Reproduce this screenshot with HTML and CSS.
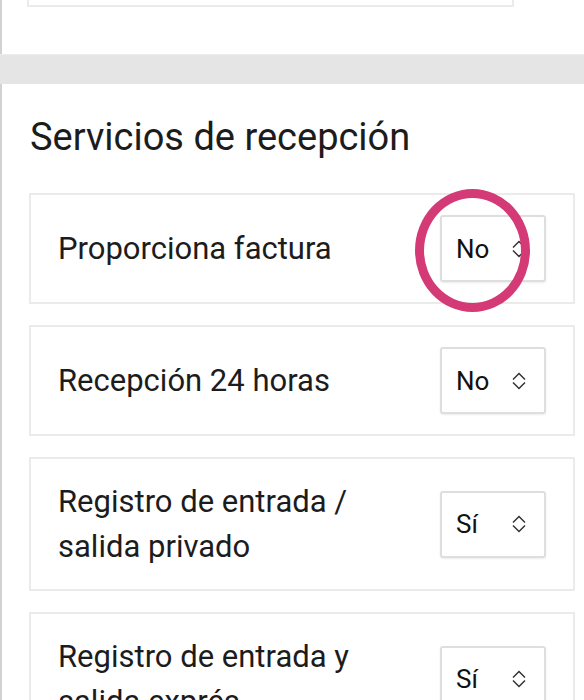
FILE: index.html
```html
<!DOCTYPE html>
<html lang="es">
<head>
  <meta charset="UTF-8" />
  <title>Servicios de recepción</title>
  <link rel="stylesheet" href="styles.css">
</head>
<body>

  <!-- end of previous section -->
  <div class="prev-section">
    <div class="prev-card"></div>
  </div>

  <div class="divider"></div>

  <!-- Reception services -->
  <div class="section">
    <h2 class="section-title">Servicios de recepción</h2>

    <div class="row">
      <span class="row-label">Proporciona factura</span>
      <div class="select">
        <span>No</span>
        <svg class="chev" viewBox="0 0 16 18" width="16" height="18"><path d="M2 7.5 L8 1.5 L14 7.5 M2 10.5 L8 16.5 L14 10.5"/></svg>
      </div>
      <div class="highlight"></div>
    </div>

    <div class="row">
      <span class="row-label">Recepción 24 horas</span>
      <div class="select">
        <span>No</span>
        <svg class="chev" viewBox="0 0 16 18" width="16" height="18"><path d="M2 7.5 L8 1.5 L14 7.5 M2 10.5 L8 16.5 L14 10.5"/></svg>
      </div>
    </div>

    <div class="row">
      <span class="row-label">Registro de entrada /<br>salida privado</span>
      <div class="select">
        <span>Sí</span>
        <svg class="chev" viewBox="0 0 16 18" width="16" height="18"><path d="M2 7.5 L8 1.5 L14 7.5 M2 10.5 L8 16.5 L14 10.5"/></svg>
      </div>
    </div>

    <div class="row">
      <span class="row-label">Registro de entrada y<br>salida exprés</span>
      <div class="select">
        <span>Sí</span>
        <svg class="chev" viewBox="0 0 16 18" width="16" height="18"><path d="M2 7.5 L8 1.5 L14 7.5 M2 10.5 L8 16.5 L14 10.5"/></svg>
      </div>
    </div>
  </div>

</body>
</html>
```

FILE: styles.css
```css
html, body {
  margin: 0;
  padding: 0;
  background: #fff;
  color: #1a1a1a;
  font-family: Roboto, "Noto Sans", sans-serif;
}

/* Tail of the section above */
.prev-section {
  height: 54px;
  border-left: 2px solid #d2d2d2;
  box-sizing: border-box;
}
.prev-card {
  margin-left: 25px;
  width: 487px;
  height: 7px;
  box-sizing: border-box;
  border: 2px solid #ebebeb;
  border-top: none;
}

/* Grey band between sections */
.divider {
  height: 30px;
  background-color: #e5e5e5;
  border-top: 1px solid #ededed;
  box-sizing: border-box;
}

.section {
  border-left: 2px solid #d2d2d2;
  padding: 0 9px 0 27px;
  display: flex;
  flex-direction: column;
  gap: 21px;
  height: 616px;
  overflow: hidden;
}

.section-title {
  margin: 30px 0 12px 1px;
  font-size: 38px;
  font-weight: 400;
  line-height: 46px;
  color: #1c1c1c;
}

/* Each setting row */
.row {
  position: relative; /* for the highlight ring */
  display: flex;
  align-items: center;
  justify-content: space-between;
  padding: 20px 27px;
  border: 2px solid #ebebeb;
  flex-shrink: 0;
}
.row-label {
  font-size: 31px;
  line-height: 45px;
  color: #1c1c1c;
}

.select {
  width: 106px;
  height: 67px;
  box-sizing: border-box;
  border: 2px solid #dedede;
  border-radius: 3px;
  box-shadow: 0 1px 2px rgba(0,0,0,0.08);
  display: flex;
  align-items: center;
  justify-content: space-between;
  padding: 0 17px 0 14px;
  font-size: 26px;
  color: #111;
  flex-shrink: 0;
}
.chev path {
  fill: none;
  stroke: #333;
  stroke-width: 1.5;
}

/* Pink annotation ring over first select */
.highlight {
  position: absolute;
  left: 384px;
  top: -6px;
  width: 115px;
  height: 123px;
  box-sizing: border-box;
  border: 9px solid #d33a76;
  border-radius: 50%;
}
```
